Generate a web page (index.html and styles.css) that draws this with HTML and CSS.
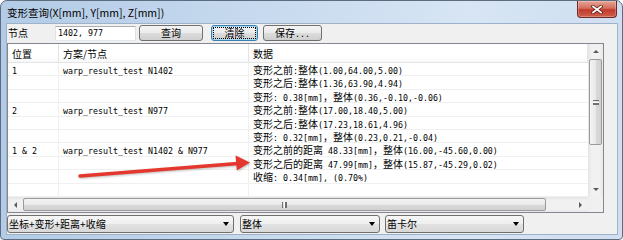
FILE: index.html
```html
<!DOCTYPE html>
<html lang="zh-CN">
<head>
<meta charset="UTF-8">
<meta name="viewport" content="width=device-width, initial-scale=1.0">
<title>变形查询</title>
<link rel="stylesheet" href="styles.css">
</head>
<body>
  <div class="window">
    <div class="titlebar">
      <span class="title">变形查询(X[mm], Y[mm], Z[mm])</span>
      <button class="close-btn" title="关闭">
        <svg width="12" height="9" viewBox="0 0 12 9">
          <path d="M2 1.5 L10 7.5 M10 1.5 L2 7.5" stroke="#5a1d16" stroke-width="3.4" stroke-linecap="square"/>
          <path d="M2 1.5 L10 7.5 M10 1.5 L2 7.5" stroke="#fff" stroke-width="1.7" stroke-linecap="square"/>
        </svg>
      </button>
    </div>

    <div class="client">
      <div class="toolbar">
        <span class="node-label">节点</span>
        <input class="node-input" type="text" value="1402, 977">
        <button class="btn btn-query">查询</button>
        <button class="btn btn-clear">清除</button>
        <button class="btn btn-save">保存<span class="m">...</span></button>
      </div>

      <div class="list">
        <div class="view">
          <div class="row head">
            <div>位置</div>
            <div>方案/节点</div>
            <div>数据</div>
          </div>
          <div class="row">
            <div><span class="m">1</span></div>
            <div><span class="m">warp_result_test N1402</span></div>
            <div>变形之前<span class="m">:</span>整体<span class="m">(1.00,64.00,5.00)</span></div>
          </div>
          <div class="row">
            <div></div>
            <div></div>
            <div>变形之后<span class="m">:</span>整体<span class="m">(1.36,63.90,4.94)</span></div>
          </div>
          <div class="row">
            <div></div>
            <div></div>
            <div>变形<span class="m">: 0.38[mm]</span>，整体<span class="m">(0.36,-0.10,-0.06)</span></div>
          </div>
          <div class="row">
            <div><span class="m">2</span></div>
            <div><span class="m">warp_result_test N977</span></div>
            <div>变形之前<span class="m">:</span>整体<span class="m">(17.00,18.40,5.00)</span></div>
          </div>
          <div class="row">
            <div></div>
            <div></div>
            <div>变形之后<span class="m">:</span>整体<span class="m">(17.23,18.61,4.96)</span></div>
          </div>
          <div class="row">
            <div></div>
            <div></div>
            <div>变形<span class="m">: 0.32[mm]</span>，整体<span class="m">(0.23,0.21,-0.04)</span></div>
          </div>
          <div class="row">
            <div><span class="m">1 &amp; 2</span></div>
            <div><span class="m">warp_result_test N1402 &amp; N977</span></div>
            <div>变形之前的距离<span class="m"> 48.33[mm]</span>，整体<span class="m">(16.00,-45.60,0.00)</span></div>
          </div>
          <div class="row">
            <div></div>
            <div></div>
            <div>变形之后的距离<span class="m"> 47.99[mm]</span>，整体<span class="m">(15.87,-45.29,0.02)</span></div>
          </div>
          <div class="row">
            <div></div>
            <div></div>
            <div>收缩<span class="m">: 0.34[mm], (0.70%)</span></div>
          </div>
          <div class="row">
            <div></div>
            <div></div>
            <div></div>
          </div>
        </div>

        <div class="vscroll">
          <div class="sb-btn"><span class="tri up"></span></div>
          <div class="vthumb"><span class="grip"></span></div>
          <div class="sb-track"></div>
          <div class="sb-btn"><span class="tri down"></span></div>
        </div>
        <div class="hscroll">
          <div class="sb-btn"><span class="tri left"></span></div>
          <div class="hthumb"><span class="grip"></span></div>
          <div class="sb-track"></div>
          <div class="sb-btn"><span class="tri right"></span></div>
        </div>
        <div class="corner"></div>
      </div>

      <div class="combos">
        <div class="combo combo-mode">坐标+变形+距离+收缩<span class="tri down dark"></span></div>
        <div class="combo combo-part">整体<span class="tri down dark"></span></div>
        <div class="combo combo-coord">笛卡尔<span class="tri down dark"></span></div>
      </div>
    </div>

    <!-- annotation arrow drawn over the list -->
    <svg class="annot" width="623" height="240" viewBox="0 0 623 240">
      <line x1="80" y1="176" x2="238" y2="163.5" stroke="#e4382f" stroke-width="3.4" stroke-linecap="round"/>
      <polygon points="250,162.5 235.5,155.5 236.8,170.5" fill="#e4382f"/>
    </svg>
  </div>
</body>
</html>
```

FILE: styles.css
```css
* {
  box-sizing: border-box;
  margin: 0;
  padding: 0;
}

body {
  width: 623px;
  height: 240px;
  font-family: "Noto Sans CJK SC", sans-serif;
  font-size: 10px;
  color: #000;
  background: #fff;
  overflow: hidden;
}

.m {
  font-family: "DejaVu Sans Mono", "Liberation Mono", monospace;
  font-size: 8.3px;
}

.window {
  position: relative;
  width: 623px;
  height: 240px;
  display: flex;
  flex-direction: column;
  padding: 0 4px 4px 5px;
  border: 1px solid #5d6d80;
  border-radius: 7px 7px 4px 4px;
  background: linear-gradient(to right, #b3cbe6, #c6d9ee 40%, #d7e5f4 75%, #cfdff1);
}

.titlebar {
  height: 22px;
  display: flex;
  justify-content: space-between;
  align-items: flex-start;
}

.title {
  padding-left: 1px;
  font-size: 10.5px;
  line-height: 23px;
}

.close-btn {
  width: 40px;
  height: 17px;
  margin-right: 1px;
  display: flex;
  align-items: center;
  justify-content: center;
  border: 1px solid #6b2b24;
  border-top: none;
  border-radius: 0 0 4px 4px;
  background: linear-gradient(#e7a597, #d46d5e 45%, #c23a2b 55%, #d0604e);
  box-shadow: inset 0 0 0 1px rgba(255, 255, 255, 0.25);
}

.client {
  flex: 1;
  display: flex;
  flex-direction: column;
  padding: 1px 13px 1px 0;
  background: #f0f0f0;
  border: 1px solid #9db1c8;
}

/* toolbar */

.toolbar {
  height: 16px;
  display: flex;
  align-items: center;
}

.node-label {
  width: 48px;
  padding-left: 1px;
  line-height: 16px;
}

.node-input {
  width: 81px;
  height: 15px;
  padding: 0 2px;
  border: 1px solid;
  border-color: #abadb3 #dbdfe6 #e3e9ef #e2e3ea;
  background: #fff;
  font-family: "DejaVu Sans Mono", "Liberation Mono", monospace;
  font-size: 8.3px;
  outline: none;
}

.btn {
  height: 16px;
  border: 1px solid #707070;
  border-radius: 3px;
  background: linear-gradient(#f3f3f3, #ebebeb 50%, #dddddd 50%, #cfcfcf);
  font-family: "Noto Sans CJK SC", sans-serif;
  font-size: 10px;
  line-height: 14px;
  color: #000;
}

.btn-query {
  width: 64px;
  margin-left: 3px;
}

.btn-clear {
  width: 47px;
  margin-left: 8px;
  border-color: #3c7fb1;
  box-shadow: inset 0 0 0 1px #a6d8f5;
  outline: 1px dotted #000;
  outline-offset: -3px;
}

.btn-save {
  width: 59px;
  margin-left: 5px;
}

/* list view */

.list {
  height: 170px;
  margin-top: 2px;
  display: grid;
  grid-template-columns: 1fr 15px;
  grid-template-rows: 1fr 15px;
  border: 1px solid #828790;
  background: #fff;
}

.view {
  overflow: hidden;
}

.row {
  height: 13.4px;
  display: grid;
  grid-template-columns: 51px 190px 1fr;
  border-bottom: 1px solid #f0f0f0;
  white-space: nowrap;
}

.row > div {
  padding: 1px 0 0 4px;
  line-height: 11px;
  border-right: 1px solid #f0f0f0;
}

.row > div:last-child {
  border-right: none;
}

.row.head {
  height: 19px;
  border-bottom: 1px solid #e5e5e5;
  background: linear-gradient(#ffffff, #ffffff 60%, #f7f8fa);
}

.row.head > div {
  padding-top: 2px;
  line-height: 16px;
  border-right: 1px solid #e5e5e5;
}

/* scroll bars */

.vscroll,
.hscroll {
  display: flex;
}

.vscroll {
  flex-direction: column;
  background: linear-gradient(to right, #e4e4e4, #f1f1f1 25%, #f1f1f1 75%, #e9e9e9);
}

.hscroll {
  background: linear-gradient(#e4e4e4, #f1f1f1 25%, #f1f1f1 75%, #e9e9e9);
}

.sb-btn {
  flex: 0 0 15px;
  display: flex;
  align-items: center;
  justify-content: center;
}

.sb-track {
  flex: 1;
}

.vthumb,
.hthumb {
  display: flex;
  align-items: center;
  justify-content: center;
  border: 1px solid #9a9a9a;
  border-radius: 2px;
}

.vthumb {
  height: 86px;
  margin: 0 1px;
  background: linear-gradient(to right, #f4f4f4, #e9e9e9 50%, #d9d9d9 51%, #d2d2d2);
}

.hthumb {
  width: 523px;
  margin: 1px 0;
  background: linear-gradient(#f4f4f4, #e9e9e9 50%, #d9d9d9 51%, #d2d2d2);
}

.grip {
  display: block;
}

.vthumb .grip {
  width: 6px;
  height: 5px;
  border-top: 1px solid #6f6f6f;
  border-bottom: 1px solid #6f6f6f;
  background: linear-gradient(#fff 0, #fff 1px, #6f6f6f 1px, #6f6f6f 2px, #fff 2px);
  background-size: 100% 3px;
  background-position: 0 1px;
  background-repeat: no-repeat;
}

.hthumb .grip {
  width: 5px;
  height: 6px;
  border-left: 1px solid #6f6f6f;
  border-right: 1px solid #6f6f6f;
  background: linear-gradient(to right, #fff 0, #fff 1px, #6f6f6f 1px, #6f6f6f 2px, #fff 2px);
  background-size: 3px 100%;
  background-position: 1px 0;
  background-repeat: no-repeat;
}

.corner {
  background: #f0f0f0;
}

.tri {
  display: block;
  width: 0;
  height: 0;
  border: 3px solid transparent;
}

.tri.up {
  border-bottom: 3px solid #5a5a5a;
  border-top-width: 0;
}

.tri.down {
  border-top: 3px solid #5a5a5a;
  border-bottom-width: 0;
}

.tri.left {
  border-right: 3px solid #5a5a5a;
  border-left-width: 0;
}

.tri.right {
  border-left: 3px solid #5a5a5a;
  border-right-width: 0;
}

.tri.dark {
  border-width: 4px 3.5px 0;
  border-top-color: #000;
}

/* combo boxes */

.combos {
  height: 18px;
  margin-top: 2px;
  display: flex;
}

.combo {
  display: flex;
  align-items: center;
  justify-content: space-between;
  padding: 0 4px 0 1px;
  border: 1px solid #707070;
  border-radius: 3px;
  background: linear-gradient(#f6f6f6, #efefef 50%, #e2e2e2 50%, #d8d8d8);
  line-height: 16px;
}

.combo-mode {
  width: 227px;
}

.combo-part {
  width: 140px;
  margin-left: 6px;
}

.combo-coord {
  width: 139px;
  margin-left: 5px;
}

.annot {
  position: absolute;
  top: -1px;
  left: -1px;
  pointer-events: none;
  filter: drop-shadow(1px 1px 1px rgba(0, 0, 0, 0.25));
}
```
